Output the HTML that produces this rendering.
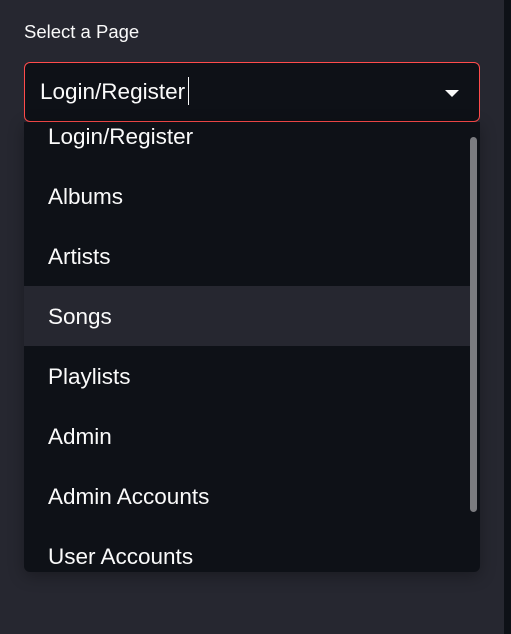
<!DOCTYPE html>
<html><head><style>
body{margin:0;width:511px;height:634px;background:#262730;position:relative;overflow:hidden;font-family:"Liberation Sans",sans-serif;}
.strip{position:absolute;left:504px;top:0;width:7px;height:634px;background:#0e1117;}
.label{position:absolute;left:24px;top:21px;font-size:18.5px;color:#fafafa;}
.sel{position:absolute;left:24px;top:62px;width:454px;height:58px;border:1px solid #ff4b4b;border-radius:6px;background:#0e1117;}
.sel .t{position:absolute;left:15px;top:16px;font-size:22.5px;color:#fafafa;}
.cur{position:absolute;left:163px;top:14px;width:1px;height:28px;background:#fafafa;}
.arr{position:absolute;left:420px;top:27px;width:0;height:0;border-left:7px solid transparent;border-right:7px solid transparent;border-top:7px solid #fafafa;}
.menu{position:absolute;left:24px;top:122px;width:456px;height:450px;background:#0e1117;border-radius:0 0 6px 6px;overflow:hidden;box-shadow:0 4px 16px rgba(0,0,0,.3);}
.it{position:absolute;left:0;width:447px;height:60px;line-height:62px;padding-left:24px;box-sizing:border-box;font-size:22.5px;color:#fafafa;}
.hov{background:#262730;}
.sb{position:absolute;left:446px;top:15px;width:7px;height:375px;background:#7b7c80;border-radius:4px;}
</style></head><body>
<div class="strip"></div>
<div class="label">Select a Page</div>
<div class="sel"><div class="t">Login/Register</div><div class="cur"></div><div class="arr"></div></div>
<div class="menu">
<div class="it" style="top:-16px">Login/Register</div>
<div class="it" style="top:44px">Albums</div>
<div class="it" style="top:104px">Artists</div>
<div class="it hov" style="top:164px">Songs</div>
<div class="it" style="top:224px">Playlists</div>
<div class="it" style="top:284px">Admin</div>
<div class="it" style="top:344px">Admin Accounts</div>
<div class="it" style="top:404px">User Accounts</div>
<div class="sb"></div>
</div>
</body></html>
